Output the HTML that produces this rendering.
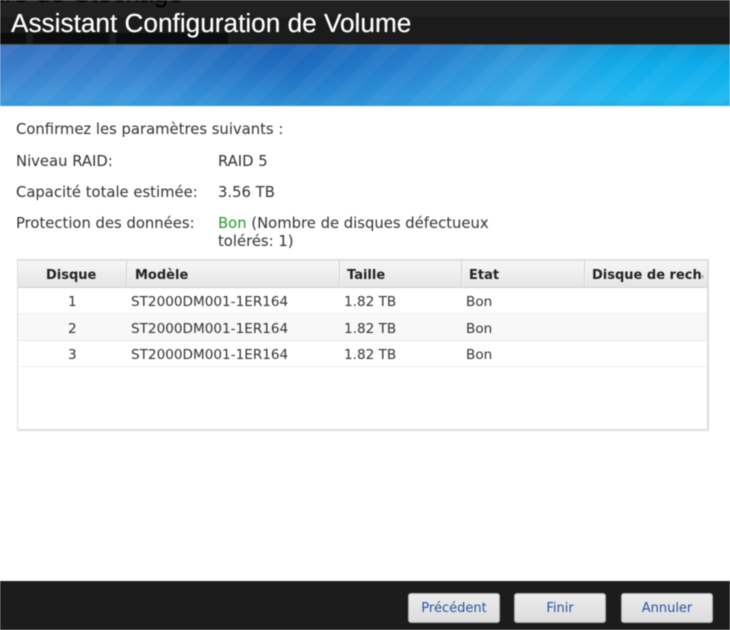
<!DOCTYPE html>
<html lang="fr">
<head>
<meta charset="utf-8">
<style>
html,body{margin:0;padding:0;background:#fff}
#p{position:relative;width:730px;height:630px;overflow:hidden;background:#fff;font-family:"DejaVu Sans",Verdana,sans-serif;font-size:13px;color:#333;filter:blur(.4px)}
#p div{position:absolute;white-space:nowrap}
.h{font-weight:bold;font-size:13px;color:#222;top:268px;line-height:16px}
.c{line-height:16px;color:#333;font-size:13.6px}
.sep{top:261px;width:2px;height:26px;background:#d2d4d6;border-right:1px solid #f4f4f4;box-sizing:border-box}
.btn{top:593px;width:92px;height:30px;box-sizing:border-box;border:1px solid #aaa;border-radius:3px;background:linear-gradient(#ececec,#dcdcdc);color:#2a52a8;text-align:center;line-height:29px;font-size:13px}
.t{line-height:16px;font-size:14.8px;color:#333}
</style>
</head>
<body>
<div id="p">
  <div style="left:0;top:0;width:730px;height:45px;background:#1b1b1b"></div>
  <div style="left:0;top:0;width:730px;height:17px;background:#212121"></div>
  <div style="left:-1px;top:-21px;font:26.5px/28px 'Liberation Sans',sans-serif;color:#000">ire de Stockage</div>
  <div style="left:0;top:33px;width:26px;height:11px;background:#0c0c0c"></div>
  <div style="left:33px;top:33px;width:76px;height:11px;background:#0c0c0c"></div>
  <div style="left:116px;top:33px;width:112px;height:11px;background:#0c0c0c"></div>
  <div style="left:0;top:44px;width:730px;height:1px;background:#555"></div>
  <div style="left:11px;top:8px;font:26.2px/30px 'Liberation Sans',sans-serif;color:#fff;text-shadow:0 0 .5px #fff">Assistant Configuration de Volume</div>

  <div style="left:0;top:45px;width:730px;height:61px;background:linear-gradient(90deg,#3f83d0 0%,#3a86d4 18%,#1f70c4 40%,#2a8ad8 58%,#35a8e8 72%,#12b4f2 85%,#0cb6f4 100%)"></div>
  <div style="left:0;top:45px;width:730px;height:61px;background:linear-gradient(180deg,rgba(20,60,130,.22) 0%,rgba(20,60,130,.08) 35%,rgba(70,190,240,.3) 90%,rgba(40,170,225,.55) 100%)"></div>
  <div style="left:0;top:45px;width:730px;height:61px;background:repeating-linear-gradient(135deg,rgba(255,255,255,.035) 0 14px,rgba(255,255,255,0) 14px 30px)"></div>

  <div class="t" style="left:16px;top:122px">Confirmez les paramètres suivants :</div>
  <div class="t" style="left:16px;top:154px">Niveau RAID:</div>
  <div class="t" style="left:218px;top:154px">RAID 5</div>
  <div class="t" style="left:16px;top:185px">Capacité totale estimée:</div>
  <div class="t" style="left:218px;top:185px">3.56 TB</div>
  <div class="t" style="left:16px;top:216px">Protection des données:</div>
  <div class="t" style="left:218px;top:216px"><span style="color:#2a9a2a">Bon</span> (Nombre de disques défectueux</div>
  <div class="t" style="left:218px;top:234px">tolérés: 1)</div>

  <div style="left:17px;top:259px;width:692px;height:172px;box-sizing:border-box;border:1px solid #dedede;border-width:2px 2px 2px 1px;background:#fff"></div>
  <div style="left:18px;top:261px;width:689px;height:26px;background:linear-gradient(#f6f6f6,#e4e5e6)"></div>
  <div style="left:18px;top:287px;width:689px;height:1px;background:#cfd0d2"></div>
  <div style="left:18px;top:314px;width:689px;height:26px;background:#f8f8f8"></div>
  <div style="left:18px;top:313px;width:689px;height:1px;background:#efefef"></div>
  <div style="left:18px;top:340px;width:689px;height:1px;background:#e8e8e8"></div>
  <div style="left:18px;top:366px;width:689px;height:1px;background:#efefef"></div>

  <div class="sep" style="left:126px"></div>
  <div class="sep" style="left:339px"></div>
  <div class="sep" style="left:461px"></div>
  <div class="sep" style="left:584px"></div>

  <div class="h" style="left:46px">Disque</div>
  <div class="h" style="left:135px">Modèle</div>
  <div class="h" style="left:347px">Taille</div>
  <div class="h" style="left:469px">Etat</div>
  <div style="left:592px;top:261px;width:111px;height:26px;overflow:hidden"><div class="h" style="left:0;top:7px">Disque de rechange</div></div>

  <div class="c" style="left:68px;top:294px">1</div>
  <div class="c" style="left:131px;top:294px">ST2000DM001-1ER164</div>
  <div class="c" style="left:344px;top:294px">1.82 TB</div>
  <div class="c" style="left:466px;top:294px">Bon</div>
  <div class="c" style="left:68px;top:321px">2</div>
  <div class="c" style="left:131px;top:321px">ST2000DM001-1ER164</div>
  <div class="c" style="left:344px;top:321px">1.82 TB</div>
  <div class="c" style="left:466px;top:321px">Bon</div>
  <div class="c" style="left:68px;top:347px">3</div>
  <div class="c" style="left:131px;top:347px">ST2000DM001-1ER164</div>
  <div class="c" style="left:344px;top:347px">1.82 TB</div>
  <div class="c" style="left:466px;top:347px">Bon</div>

  <div style="left:0;top:581px;width:730px;height:49px;background:#1c1c1c"></div>
  <div class="btn" style="left:408px">Précédent</div>
  <div class="btn" style="left:514px">Finir</div>
  <div class="btn" style="left:621px">Annuler</div>
</div>
</body>
</html>
